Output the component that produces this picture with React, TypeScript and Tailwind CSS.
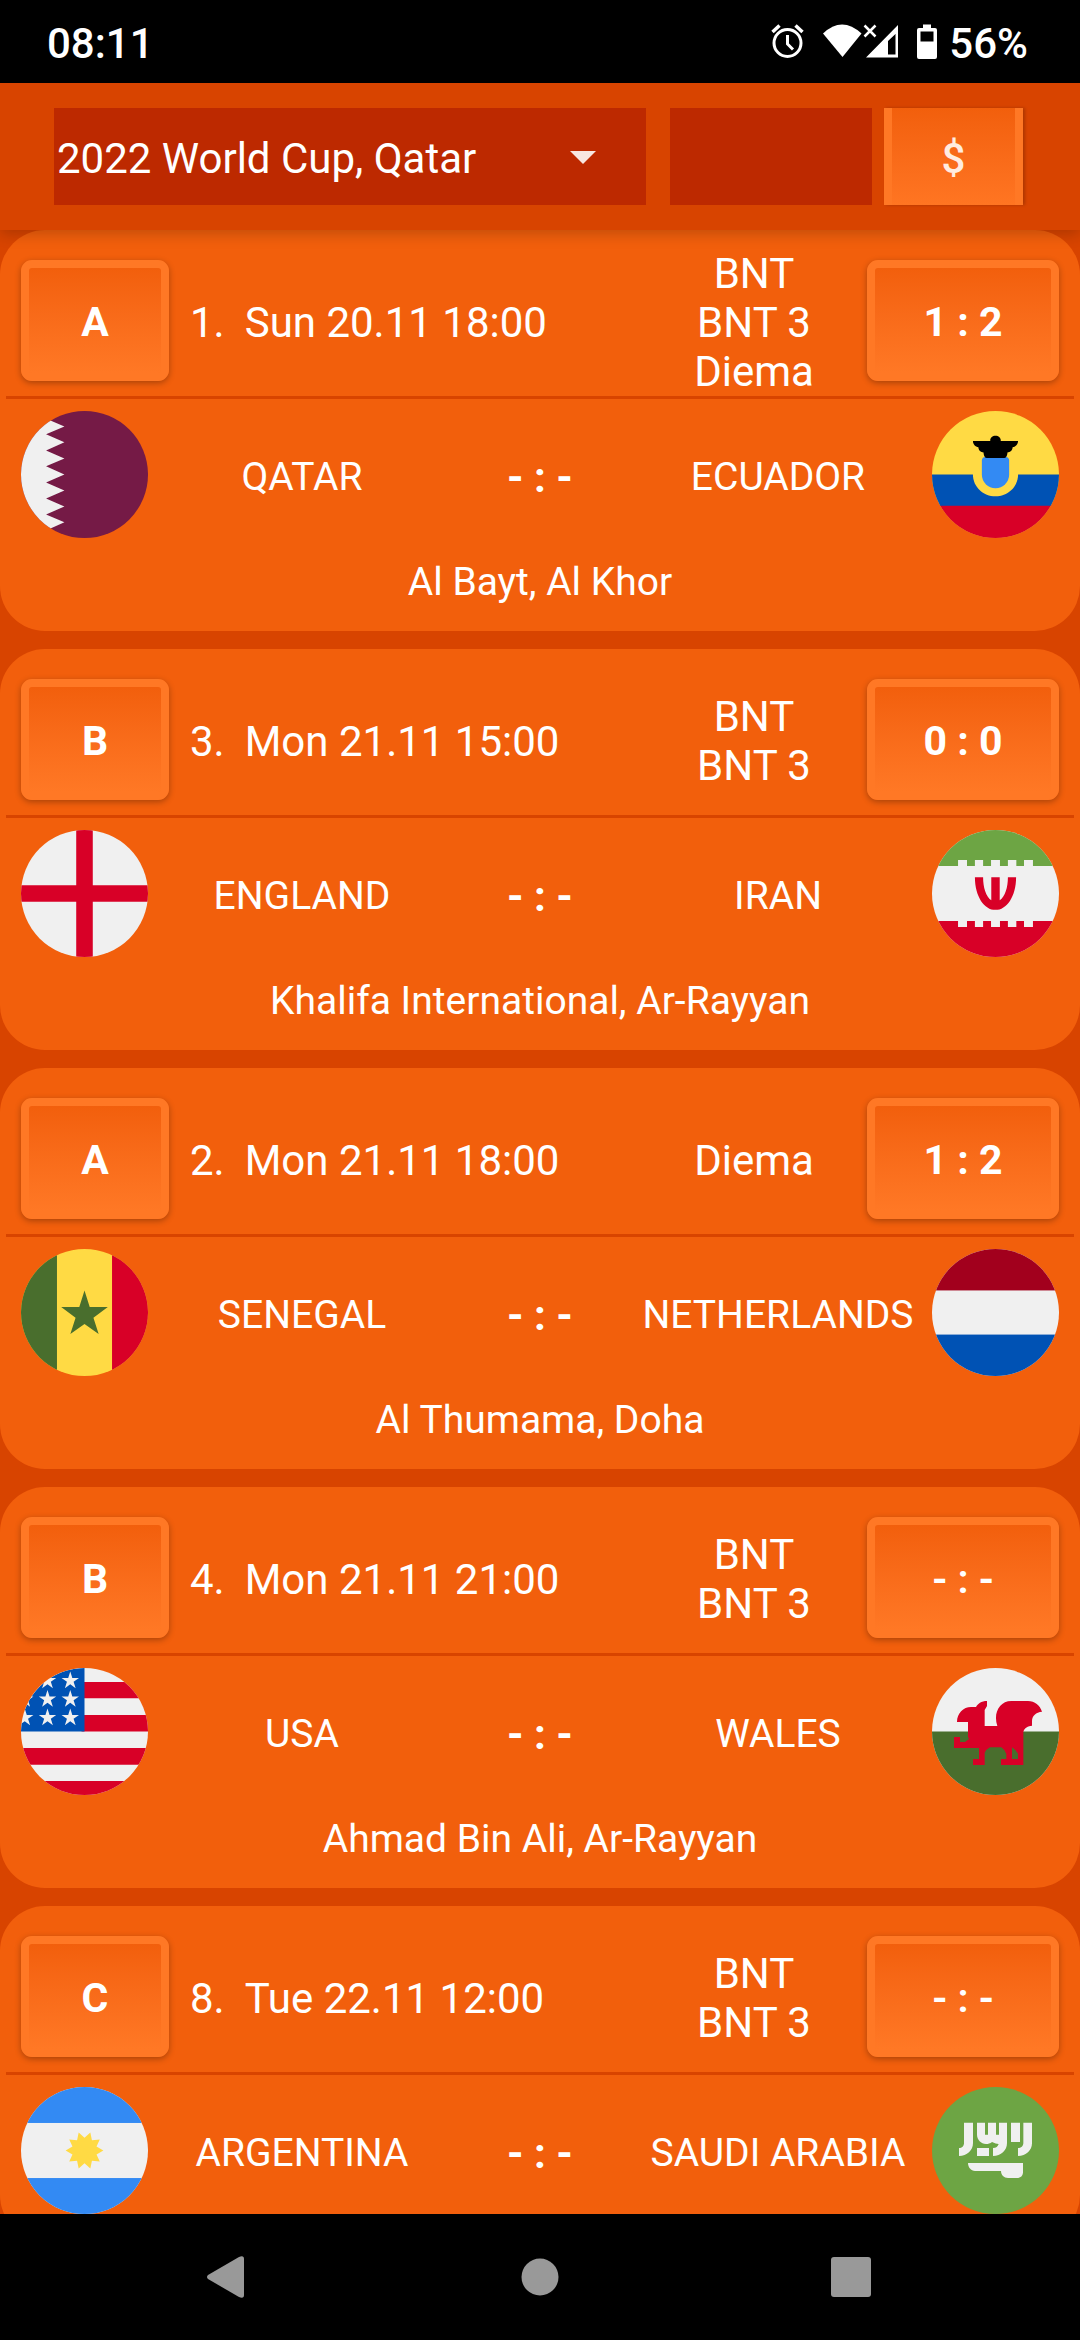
import React from "react";

type Team = { name: string; flag: React.ReactNode };
type Match = {
  id: number;
  group: string;
  date: string;
  channels: string[];
  tip: string;
  home: Team;
  away: Team;
  venue?: string;
};

function Flag({ name, base, children }: { name: string; base: string; children?: React.ReactNode }) {
  const id = "clip-" + name.toLowerCase().replace(" ", "-");
  return (
    <svg viewBox="0 0 512 512" className="size-[127px] shrink-0" role="img" aria-label={name + " flag"}>
      <clipPath id={id}>
        <circle cx="256" cy="256" r="256" />
      </clipPath>
      <g clipPath={`url(#${id})`}>
        <rect width="512" height="512" fill={base} />
        {children}
      </g>
    </svg>
  );
}

const sunPoints = Array.from({ length: 20 }, (_, i) => {
  const r = i % 2 === 0 ? 76 : 51;
  const a = (i * Math.PI) / 10;
  return `${256 + r * Math.cos(a)},${256 + r * Math.sin(a)}`;
}).join(" ");

const qatar = (
  <Flag name="QATAR" base="#751A46">
    <path
      fill="#F0F0F0"
      d="M0 0H121V39L175 62 101 94 175 126 101 159 175 191 101 223 175 256 101 288 175 320 101 353 175 385 101 417 175 449 121 473V512H0z"
    />
  </Flag>
);
const ecuador = (
  <Flag name="ECUADOR" base="#FFDA44">
    <rect y="256" width="512" height="127" fill="#0052B4" />
    <rect y="382" width="512" height="130" fill="#D80027" />
    <path fill="#FFDA44" d="M165 250H347V256C347 306 306 344 256 344S165 306 165 256z" />
    <path fill="#338AF3" d="M201 200C201 191 206 185 214 185H298C306 185 311 191 311 200V256A55 55 0 0 1 201 256z" />
    <path
      fill="#000"
      d="M165 121H235C233 109 243 100 256 100S279 109 277 121H347C347 134 337 145 325 146 325 158 315 167 304 167 304 176 300 189 292 189H220C212 189 208 176 208 167 197 167 187 158 187 146 175 145 165 134 165 121z"
    />
  </Flag>
);
const england = (
  <Flag name="ENGLAND" base="#F0F0F0">
    <path fill="#D80027" d="M222.600 0H289.400V222.600H512V289.400H289.400V512H222.600V289.400H0V222.600H222.600z" />
  </Flag>
);
const iran = (
  <Flag name="IRAN" base="#F0F0F0">
    <path
      fill="#6DA544"
      d="M0 0H512V145H407V121H371V145H340V121H306V145H274V121H238V145H206V121H173V145H141V121H105V145H0z"
    />
    <path
      fill="#D80027"
      d="M0 512H512V367H407V391H371V367H340V391H306V367H274V391H238V367H206V391H173V367H141V391H105V367H0z"
    />
    <path
      fill="#D80027"
      d="M173 190H206C206 230 217 268 239 283V190H273V283C295 268 306 230 306 190H339C339 268 301 322 256 322S173 268 173 190z"
    />
  </Flag>
);
const senegal = (
  <Flag name="SENEGAL" base="#FFDA44">
    <rect width="145" height="512" fill="#496E2D" />
    <rect x="367" width="145" height="512" fill="#D80027" />
    <polygon
      fill="#496E2D"
      points="256,167 277,234 350,234 292,277 313,343 256,302 199,343 220,277 162,234 235,234"
    />
  </Flag>
);
const netherlands = (
  <Flag name="NETHERLANDS" base="#F0F0F0">
    <rect width="512" height="167" fill="#A2001D" />
    <rect y="345" width="512" height="167" fill="#0052B4" />
  </Flag>
);
const usa = (
  <Flag name="USA" base="#F0F0F0">
    <path
      fill="#D80027"
      d="M244 189H512V256H244zM244 56H512V122H244zM0 323H512V390H0zM0 456H512V512H0z"
    />
    <path
      fill="#0052B4"
      d="M118.584,39.978h23.329l-21.7,15.765l8.289,25.509l-21.699-15.765L85.104,81.252l7.16-22.037C73.158,75.13,56.412,93.776,42.612,114.552h7.475l-13.813,10.035c-2.152,3.59-4.216,7.237-6.194,10.938l6.596,20.301l-12.306-8.941c-3.059,6.481-5.857,13.108-8.372,19.873l7.267,22.368h26.822l-21.7,15.765l8.289,25.509l-21.699-15.765l-12.998,9.444C0.678,234.537,0,245.189,0,256h256V0C205.428,0,158.285,14.67,118.584,39.978z M128.502,230.4l-21.699-15.765L85.104,230.4l8.289-25.509l-21.7-15.765h26.822l8.288-25.509l8.288,25.509h26.822l-21.7,15.765L128.502,230.4z M120.213,130.317l8.289,25.509l-21.699-15.765l-21.699,15.765l8.289-25.509l-21.7-15.765h26.822l8.288-25.509l8.288,25.509h26.822L120.213,130.317z M220.328,230.4l-21.699-15.765L176.93,230.4l8.289-25.509l-21.7-15.765h26.822l8.288-25.509l8.288,25.509h26.822l-21.7,15.765L220.328,230.4z M212.039,130.317l8.289,25.509l-21.699-15.765l-21.699,15.765l8.289-25.509l-21.7-15.765h26.822l8.288-25.509l8.288,25.509h26.822L212.039,130.317z M212.039,55.743l8.289,25.509l-21.699-15.765L176.93,81.252l8.289-25.509l-21.7-15.765h26.822l8.288-25.509l8.288,25.509h26.822L212.039,55.743z"
    />
  </Flag>
);
const wales = (
  <Flag name="WALES" base="#F0F0F0">
    <rect y="256" width="512" height="256" fill="#496E2D" />
    <path
      transform="scale(1.344) translate(-96 -54)"
      fill="#D80027"
      fillRule="evenodd"
      d="M171 216C171 190 190 171 213 171H228C233 161 244 153 261 153V168L254 180V228H292C279 190 298 153 334 153H384C404 153 420 166 426 185C408 186 396 198 396 213V227C384 228 373 234 370 245V345H303V327H319V312Q316 300 304 292H270Q257 299 254 308V345H219V327H237V294H162V261H180V276H195L207 267 204 261V216zM336 292V327H354V312Q349 300 336 292z"
    />
  </Flag>
);
const argentina = (
  <Flag name="ARGENTINA" base="#F0F0F0">
    <rect width="512" height="145" fill="#338AF3" />
    <rect y="367" width="512" height="145" fill="#338AF3" />
    <polygon fill="#FFDA44" points={sunPoints} />
  </Flag>
);
const saudi = (
  <Flag name="SAUDI ARABIA" base="#6DA544">
    <g transform="scale(1.344) translate(-96 -51)" fill="#F0F0F0">
      <path d="M192 158H219V219C219 241 201 258 177 258V234C186 234 192 228 192 219z" />
      <path d="M231 158H255V194H264V158H288V194H297V158H321V219C321 241 303 258 279 258V234C288 234 294 229 296 222C290 222 284 219 276 216C271 220 264 222 258 222C243 221 231 209 231 194z" />
      <path d="M231 234H267V258H231zM333 158H360V216H333z" />
      <path d="M370 158H396V219C396 241 378 258 354 258V234C363 234 370 228 370 219z" />
      <path d="M204 279H369V306C369 317 362 324 351 324H324C312 324 303 315 303 303H225C213 303 204 292 204 279z" />
    </g>
  </Flag>
);

const matches: Match[] = [
  { id: 1, group: "A", date: "Sun 20.11 18:00", channels: ["BNT", "BNT 3", "Diema"], tip: "1 : 2", home: { name: "QATAR", flag: qatar }, away: { name: "ECUADOR", flag: ecuador }, venue: "Al Bayt, Al Khor" },
  { id: 3, group: "B", date: "Mon 21.11 15:00", channels: ["BNT", "BNT 3"], tip: "0 : 0", home: { name: "ENGLAND", flag: england }, away: { name: "IRAN", flag: iran }, venue: "Khalifa International, Ar-Rayyan" },
  { id: 2, group: "A", date: "Mon 21.11 18:00", channels: ["Diema"], tip: "1 : 2", home: { name: "SENEGAL", flag: senegal }, away: { name: "NETHERLANDS", flag: netherlands }, venue: "Al Thumama, Doha" },
  { id: 4, group: "B", date: "Mon 21.11 21:00", channels: ["BNT", "BNT 3"], tip: "- : -", home: { name: "USA", flag: usa }, away: { name: "WALES", flag: wales }, venue: "Ahmad Bin Ali, Ar-Rayyan" },
  { id: 8, group: "C", date: "Tue 22.11 12:00", channels: ["BNT", "BNT 3"], tip: "- : -", home: { name: "ARGENTINA", flag: argentina }, away: { name: "SAUDI ARABIA", flag: saudi } },
];

function StatusBar() {
  return (
    <div className="flex h-[83px] shrink-0 items-center bg-black pl-[47px] pr-[52px] text-[42px] font-medium">
      <span className="flex-1 pt-[3px]">08:11</span>
      <svg viewBox="0 0 170 38" className="mr-[9px] h-[38px] w-[170px]" aria-hidden="true">
        <g fill="none" stroke="#fff">
          <circle cx="17.500" cy="20" r="13.500" strokeWidth="3" />
          <path d="M17.500 12V21L23 26.500" strokeWidth="3" />
          <path d="M2.500 9L9.500 2.500M32.500 9L25.500 2.500" strokeWidth="3.500" />
          <path d="M94.500 2.500L105.500 13.500M105.500 2.500L94.500 13.500" strokeWidth="2.500" />
        </g>
        <path fill="#fff" d="M53 10.500Q72 -7.500 91.500 10.500L72.500 34z" />
        <path fill="#fff" fillRule="evenodd" d="M96 34.500L128 2V34.500zM118 18V31.500H125.500V11z" />
        <path
          fill="#fff"
          fillRule="evenodd"
          d="M153 1.500H161V5H165Q167 5 167 7V34Q167 36 165 36H149Q147 36 147 34V7Q147 5 149 5H153zM150.500 8.500V18.500H163.500V8.500z"
        />
      </svg>
      <span className="pt-[3px]">56%</span>
    </div>
  );
}

function Toolbar() {
  return (
    <header className="z-10 flex h-[147px] shrink-0 items-center bg-[#d84400] pl-[54px] pr-[57px] shadow-[0_4px_14px_rgba(0,0,0,0.2)]">
      <div className="relative flex-1">
        <select
          aria-label="Tournament"
          className="block h-[97px] w-full appearance-none rounded-none bg-[#bd2900] pl-[3px] pr-20 pt-[3px] text-[42px] text-white outline-none"
        >
          <option>2022 World Cup, Qatar</option>
        </select>
        <svg viewBox="0 0 26 13" className="pointer-events-none absolute right-[50px] top-[43px] h-[13px] w-[26px]" aria-hidden="true">
          <path fill="#f8e6e0" d="M0 0H26L13 13z" />
        </svg>
      </div>
      <input aria-label="Code" type="text" className="ml-6 h-[97px] w-[202px] bg-[#bd2900] px-2 text-[42px] outline-none" />
      <button className="ml-3 h-[97px] w-[139px] border-x-8 border-[#ff7825] bg-linear-to-b from-[#f25f0c] to-[#ff7522] pt-[3px] text-[42px] font-medium text-[#ffece0] shadow-[2px_0_3px_rgba(0,0,0,0.2)]">
        $
      </button>
    </header>
  );
}

const raised =
  "h-[121px] shrink-0 rounded-[11px] border-8 border-[#ff7825] bg-linear-to-b from-[#f25f0c] to-[#ff7825] pt-[3px] text-[41px] shadow-[0_2px_6px_rgba(0,0,0,0.3)]";

function MatchCard({ match }: { match: Match }) {
  const tipped = match.tip !== "- : -";
  return (
    <article className="shrink-0 rounded-[45px] bg-[#f25f0c]">
      <div className="flex min-h-[166px] items-center px-[21px] pt-[15px] text-[42px] leading-[49px]">
        <button className={raised + " w-[148px] font-bold"}>{match.group}</button>
        <div className="flex flex-1 gap-5 pl-[21px] pt-[3px]">
          <span>{match.id}.</span>
          <time>{match.date}</time>
        </div>
        <div className="w-[226px] pt-[3px] text-center">
          {match.channels.map((c) => (
            <div key={c}>{c}</div>
          ))}
        </div>
        <button className={raised + (tipped ? " w-[192px] font-bold" : " w-[192px] font-semibold")}>{match.tip}</button>
      </div>
      <div className="mx-[6px] h-[3px] bg-[#d84400]" />
      <div className="px-[21px] pb-[26px] pt-3">
        <div className="flex items-center">
          {match.home.flag}
          <span className="flex-1 pt-[5px] text-center text-[39px]">{match.home.name}</span>
          <span className="w-[168px] pt-[5px] text-center text-[42px] font-bold">- : -</span>
          <span className="flex-1 pt-[5px] text-center text-[39px]">{match.away.name}</span>
          {match.away.flag}
        </div>
        {match.venue && <p className="mt-[21px] text-center text-[39px] leading-[46px]">{match.venue}</p>}
      </div>
    </article>
  );
}

function NavBar() {
  return (
    <nav className="flex h-[126px] shrink-0 items-center justify-center gap-[249px] bg-black">
      <button aria-label="Back" className="flex w-[62px] justify-center">
        <svg viewBox="0 0 44 42" className="h-[42px] w-11">
          <path fill="#999" d="M1 19L32 1Q37 -1 37 3V39Q37 43 32 41L1 23Q-1 21 1 19z" />
        </svg>
      </button>
      <button aria-label="Home" className="flex w-[62px] justify-center">
        <svg viewBox="0 0 38 38" className="size-[38px]">
          <circle cx="19" cy="19" r="18.500" fill="#999" />
        </svg>
      </button>
      <button aria-label="Recents" className="flex w-[62px] justify-center">
        <svg viewBox="0 0 40 40" className="size-10">
          <rect width="40" height="40" rx="3" fill="#999" />
        </svg>
      </button>
    </nav>
  );
}

export default function App() {
  return (
    <div className="flex h-screen flex-col bg-[#d84400] font-[Roboto,sans-serif] text-white">
      <StatusBar />
      <Toolbar />
      <main className="flex min-h-0 flex-1 flex-col gap-[18px] overflow-hidden">
        {matches.map((m) => (
          <MatchCard key={m.id} match={m} />
        ))}
      </main>
      <NavBar />
    </div>
  );
}
